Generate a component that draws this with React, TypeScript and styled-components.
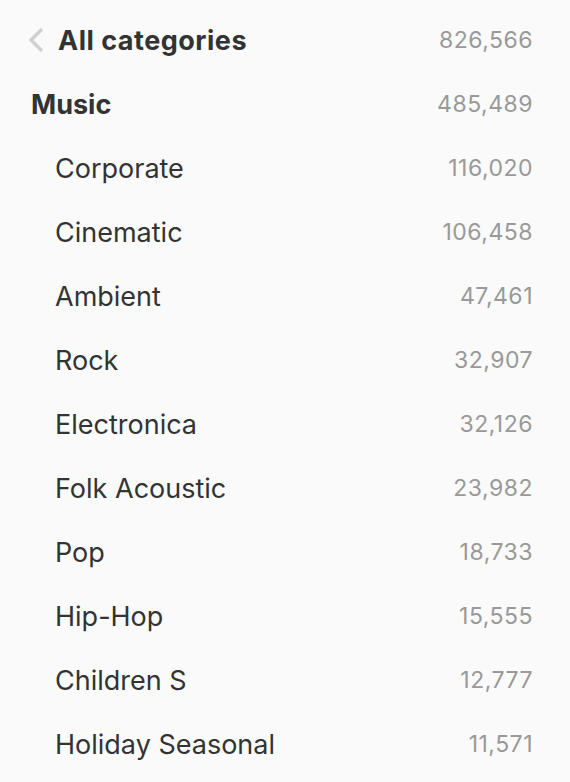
import React from 'react'
import styled, { createGlobalStyle } from 'styled-components'

const GlobalStyle = createGlobalStyle`
  html, body {
    margin: 0;
    padding: 0;
    background: #fafafa;
  }
`

const Wrapper = styled.div`
  box-sizing: border-box;
  width: 570px;
  height: 782px;
  padding: 8px 37px 0 0;
  background: #fafafa;
  font-family: Inter, "Noto Sans", sans-serif;
  color: #333;
`

const Row = styled.div<{ $indent: number }>`
  display: flex;
  align-items: center;
  justify-content: space-between;
  height: 64px;
  padding-left: ${p => p.$indent}px;
`

const Label = styled.span<{ $bold?: boolean; $spacing?: number }>`
  display: flex;
  align-items: center;
  font-size: 27px;
  font-weight: ${p => (p.$bold ? 700 : 400)};
  letter-spacing: ${p => p.$spacing ?? 0}px;
`

const Count = styled.span`
  font-size: 23px;
  letter-spacing: 0.5px;
  color: #999;
`

const Back = styled.svg`
  width: 18px;
  height: 26px;
  margin-right: 13px;
`

const items: [string, string][] = [
  ['Corporate', '116,020'],
  ['Cinematic', '106,458'],
  ['Ambient', '47,461'],
  ['Rock', '32,907'],
  ['Electronica', '32,126'],
  ['Folk Acoustic', '23,982'],
  ['Pop', '18,733'],
  ['Hip-Hop', '15,555'],
  ['Children S', '12,777'],
  ['Holiday Seasonal', '11,571'],
]

const App: React.FunctionComponent = () => {
  return (
    <Wrapper>
      <GlobalStyle />
      <Row $indent={27}>
        <Label $bold $spacing={0.5}>
          <Back viewBox="0 0 18 26">
            <path d="M15 2 L4 13 L15 24" fill="none" stroke="#d0d0d0" strokeWidth="3.4" />
          </Back>
          All categories
        </Label>
        <Count>826,566</Count>
      </Row>
      <Row $indent={31}>
        <Label $bold>Music</Label>
        <Count>485,489</Count>
      </Row>
      {items.map(([name, count]) => (
        <Row key={name} $indent={55}>
          <Label>{name}</Label>
          <Count>{count}</Count>
        </Row>
      ))}
    </Wrapper>
  )
}

export default App
